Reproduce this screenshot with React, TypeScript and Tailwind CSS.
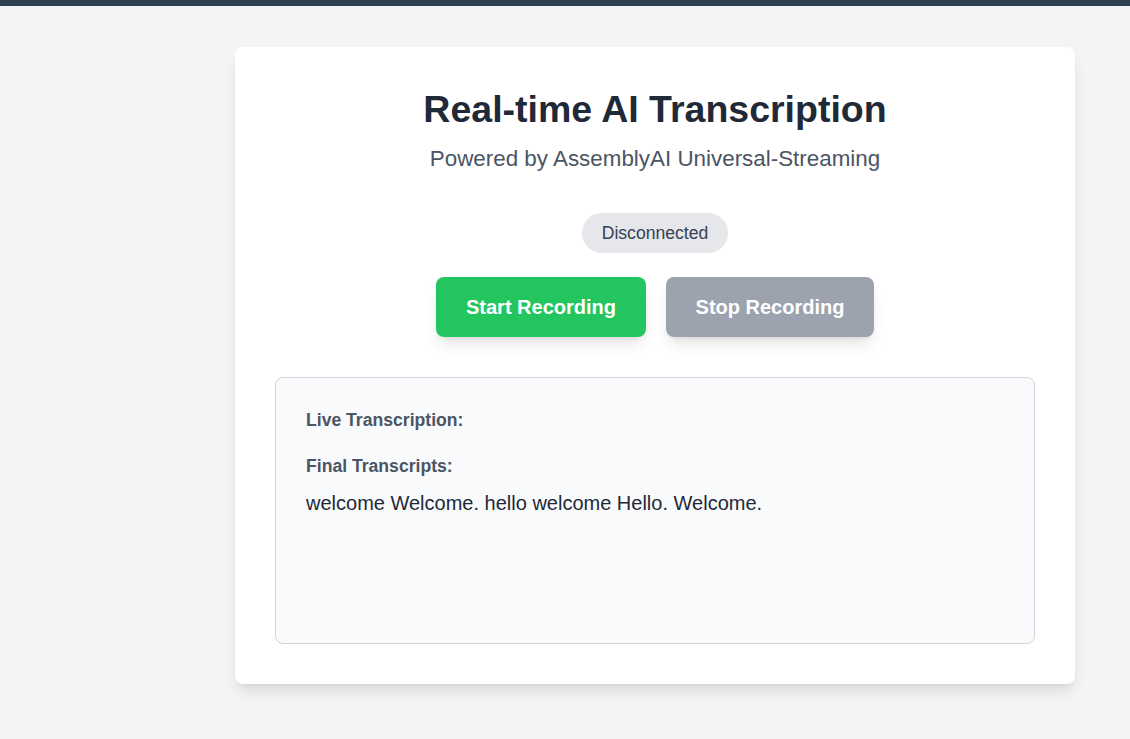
import React from "react";

export default function App() {
  return (
    <div className="min-h-[739px] bg-[#f3f4f6]" style={{ fontFamily: '"Liberation Sans", Arial, sans-serif' }}>
      <div className="h-[6px] bg-[#2d3e4e]" />
      <div className="pt-[41px] pl-[235px]">
        <div className="w-[840px] bg-white rounded-lg shadow-lg p-10">
          <h1 className="text-center text-[37.5px] leading-[40px] font-bold text-[#1f2937] mt-[2px]">
            Real-time AI Transcription
          </h1>
          <p className="text-center text-[22.4px] leading-[28px] text-[#4b5563] mt-[16px]">
            Powered by AssemblyAI Universal-Streaming
          </p>
          <div className="flex justify-center mt-[40px]">
            <span className="inline-flex items-center h-[40px] px-5 rounded-full bg-[#e5e7eb] text-[#374151] text-[17.6px]">
              Disconnected
            </span>
          </div>
          <div className="flex justify-center gap-5 mt-6">
            <button className="w-[210px] h-[60px] rounded-lg bg-[#22c55e] text-white text-[20px] font-bold shadow-lg">
              Start Recording
            </button>
            <button className="w-[208px] h-[60px] rounded-lg bg-[#9ca3af] text-white text-[20px] font-bold shadow-lg">
              Stop Recording
            </button>
          </div>
          <div className="mt-10 h-[267px] border border-[#d1d5db] bg-[#f9fafb] rounded-lg p-[30px]">
            <div className="text-[17.6px] leading-[24px] font-bold text-[#4b5563]">Live Transcription:</div>
            <div className="mt-[22px] text-[17.6px] leading-[24px] font-bold text-[#4b5563]">Final Transcripts:</div>
            <div className="mt-[11px] text-[20px] leading-[28px] text-[#1f2937]">
              welcome Welcome. hello welcome Hello. Welcome.
            </div>
          </div>
        </div>
      </div>
    </div>
  );
}
